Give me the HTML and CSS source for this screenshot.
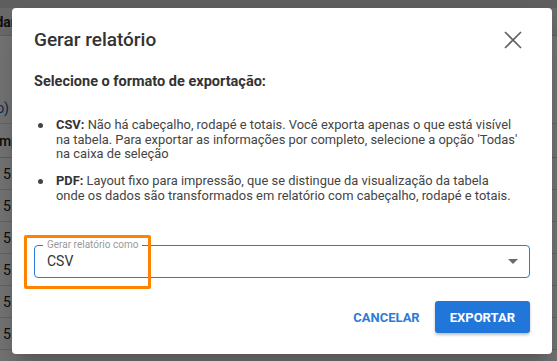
FILE: index.html
```html
<!DOCTYPE html>
<html lang="pt-BR">
<head>
  <meta charset="UTF-8" />
  <meta name="viewport" content="width=device-width, initial-scale=1.0" />
  <title>Gerar relatório</title>
  <link rel="stylesheet" href="styles.css">
</head>
<body>

  <!-- pagina por tras do modal -->
  <div class="page">
    <div class="topbar"></div>
    <div class="thead">
      <div class="clip clip-head"><span>Consolidar</span></div>
    </div>
    <div class="filters">
      <div class="clip clip-link"><span>(Período)</span></div>
    </div>
    <div class="thead thead-2">
      <span class="col-name">Empresa</span>
    </div>
    <div class="row">5 -</div>
    <div class="row">5 -</div>
    <div class="row">5 -</div>
    <div class="row">5 -</div>
    <div class="row">5 -</div>
    <div class="row">5 -</div>
  </div>

  <div class="backdrop"></div>

  <div class="dialog">
    <div class="dialog-header">
      <h2>Gerar relatório</h2>
      <button class="close" type="button" aria-label="Fechar">
        <svg width="24" height="24" viewBox="0 0 24 24">
          <path d="M4 4 L20 20 M20 4 L4 20" stroke="#5f5f5f" stroke-width="1.6" fill="none" />
        </svg>
      </button>
    </div>

    <p class="subtitle">Selecione o formato de exportação:</p>

    <ul class="formats">
      <li><span><strong>CSV:</strong> Não há cabeçalho, rodapé e totais. Você exporta apenas o que está visível na tabela. Para exportar as informações por completo, selecione a opção 'Todas' na caixa de seleção</span></li>
      <li><span><strong>PDF:</strong> Layout fixo para impressão, que se distingue da visualização da tabela onde os dados são transformados em relatório com cabeçalho, rodapé e totais.</span></li>
    </ul>

    <div class="field-wrap">
      <fieldset class="field">
        <legend>Gerar relatório como</legend>
        <div class="select">
          <span>CSV</span>
          <svg width="10" height="5" viewBox="0 0 10 5">
            <path d="M0 0 L10 0 L5 5 Z" fill="#6b6b6b" />
          </svg>
        </div>
      </fieldset>
      <div class="highlight"></div>
    </div>

    <div class="actions">
      <button class="btn-text" type="button">Cancelar</button>
      <button class="btn-primary" type="button">Exportar</button>
    </div>
  </div>

</body>
</html>
```

FILE: styles.css
```css
/* Global */
* {
  box-sizing: border-box;
  margin: 0;
  padding: 0;
}
body {
  width: 557px;
  height: 361px;
  overflow: hidden;
  position: relative;
  font-family: Roboto, "Liberation Sans", Arial, sans-serif;
  background: #fff;
}

/* Pagina de fundo */
.page {
  display: flex;
  flex-direction: column;
  color: #222;
}
.topbar {
  height: 8px;
  background: #cfcfcf;
}
.thead {
  height: 28px;
  background: #e8e8e8;
  border-bottom: 1px solid #d0d0d0;
  display: flex;
  align-items: center;
  font-size: 14px;
  font-weight: 700;
}
.filters {
  height: 88px;
  display: flex;
  align-items: flex-end;
  padding-bottom: 7px;
  font-size: 14px;
  border-bottom: 1px solid #e0e0e0;
}
.thead-2 {
  height: 34px;
  background: #fff;
  font-weight: 500;
}
.col-name {
  margin-left: -9px;
}
.clip {
  display: flex;
  justify-content: flex-end;
  white-space: nowrap;
}
.clip-head { width: 16px; }
.clip-link { width: 9px; color: #1d5fb8; }
.row {
  height: 32px;
  display: flex;
  align-items: center;
  padding-left: 3px;
  font-size: 14px;
  border-bottom: 1px solid #dcdcdc;
  white-space: nowrap;
}

.backdrop {
  position: absolute;
  inset: 0;
  background: rgba(0, 0, 0, 0.54);
}

/* Modal */
.dialog {
  position: absolute;
  left: 12px;
  top: 8px;
  width: 540px;
  height: 346px;
  padding: 20px 22px 21px;
  display: flex;
  flex-direction: column;
  background: #fff;
  border-radius: 4px;
  box-shadow: 0 11px 15px -7px rgba(0, 0, 0, 0.2), 0 24px 38px 3px rgba(0, 0, 0, 0.14);
  color: #444;
}
.dialog-header {
  display: flex;
  justify-content: space-between;
  align-items: center;
}
h2 {
  font-size: 19px;
  line-height: 24px;
  font-weight: 500;
  color: #333;
}
.close {
  border: none;
  background: none;
  width: 24px;
  height: 24px;
  margin-right: 5px;
  display: flex;
  cursor: pointer;
}
.subtitle {
  margin-top: 21px;
  font-size: 14.5px;
  line-height: 18px;
  font-weight: 700;
  color: #333;
}
.formats {
  list-style: none;
  margin-top: 27px;
  padding-right: 11px;
  font-size: 12.9px;
  line-height: 14.5px;
}
.formats li {
  display: flex;
  align-items: flex-start;
}
.formats li::before {
  content: "";
  flex: none;
  width: 5px;
  height: 5px;
  border-radius: 50%;
  background: #444;
  margin: 5px 13px 0 4px;
}
.formats li + li {
  margin-top: 12.5px;
}
.formats strong {
  color: #333;
}

/* Campo select */
.field-wrap {
  position: relative;
  margin-top: 36px;
}
.field {
  border: 1px solid #2b7bd8;
  border-radius: 4px;
  padding: 0 8px 6px;
}
.field legend {
  font-size: 10px;
  line-height: 12px;
  padding: 0 4px;
  color: #9a9a9a;
}
.select {
  display: flex;
  justify-content: space-between;
  align-items: center;
  padding: 0 3px 0 4px;
  font-size: 14px;
  line-height: 20px;
  color: #333;
}
.highlight {
  position: absolute;
  left: -10px;
  top: -4px;
  width: 127px;
  height: 54px;
  border: 3px solid #ff8200;
  border-radius: 2px;
}

/* Botoes */
.actions {
  margin-top: auto;
  display: flex;
  justify-content: flex-end;
  align-items: center;
}
.btn-text,
.btn-primary {
  font-family: inherit;
  font-size: 13px;
  font-weight: 700;
  text-transform: uppercase;
  border: none;
  height: 32px;
  cursor: pointer;
}
.btn-text {
  background: none;
  color: #2b7bd8;
  padding: 0 8px;
  margin-right: 7px;
}
.btn-primary {
  background: #2176d9;
  color: #fff;
  padding: 0 15px;
  border-radius: 3px;
  box-shadow: 0 2px 3px rgba(0, 0, 0, 0.25);
}
```
